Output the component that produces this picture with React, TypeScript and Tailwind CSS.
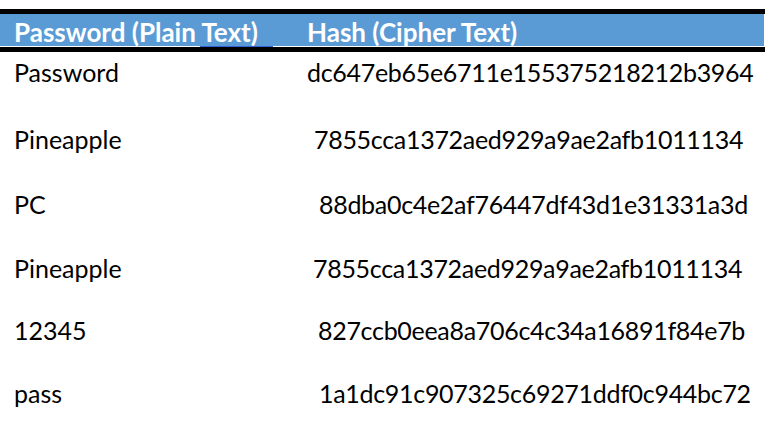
const rows = [
  { plain: "Password", hash: "dc647eb65e6711e155375218212b3964", gap: "mt-[4px]", indent: "ml-0" },
  { plain: "Pineapple", hash: "7855cca1372aed929a9ae2afb1011134", gap: "mt-[35px]", indent: "ml-[7px]" },
  { plain: "PC", hash: "88dba0c4e2af76447df43d1e31331a3d", gap: "mt-[33px]", indent: "ml-[12px]" },
  { plain: "Pineapple", hash: "7855cca1372aed929a9ae2afb1011134", gap: "mt-[32px]", indent: "ml-[6px]" },
  { plain: "12345", hash: "827ccb0eea8a706c4c34a16891f84e7b", gap: "mt-[30px]", indent: "ml-[11px]" },
  { plain: "pass", hash: "1a1dc91c907325c69271ddf0c944bc72", gap: "mt-[31px]", indent: "ml-[12px]" },
];

export default function App() {
  return (
    <div className="w-[768px] h-[429px] overflow-hidden bg-white font-['Lato',sans-serif] text-black">
      <div className="pt-[9px] w-[765px]">
        <div className="h-[5px] bg-black" />
        <div className="h-[32px] bg-[#5b9bd5] mr-px flex items-center pt-[3px] text-white font-bold text-[26px] leading-none">
          <span className="pl-[14px] w-[307px] shrink-0 relative">
            Password (Plain Text)
            <span className="absolute left-[200px] w-[73px] top-[27px] h-px bg-[#2f63d6]" />
          </span>
          <span className="whitespace-nowrap">Hash (Cipher Text)</span>
        </div>
        <div className="h-px bg-white" />
        <div className="h-[5px] bg-black" />
      </div>
      <div className="flex flex-col text-[25px] leading-[32px]">
        {rows.map((r, i) => (
          <div key={i} className={r.gap + " flex whitespace-nowrap"}>
            <span className="pl-[14px] w-[307px] shrink-0">{r.plain}</span>
            <span className={r.indent + " tracking-[-0.3px]"}>{r.hash}</span>
          </div>
        ))}
      </div>
    </div>
  );
}
